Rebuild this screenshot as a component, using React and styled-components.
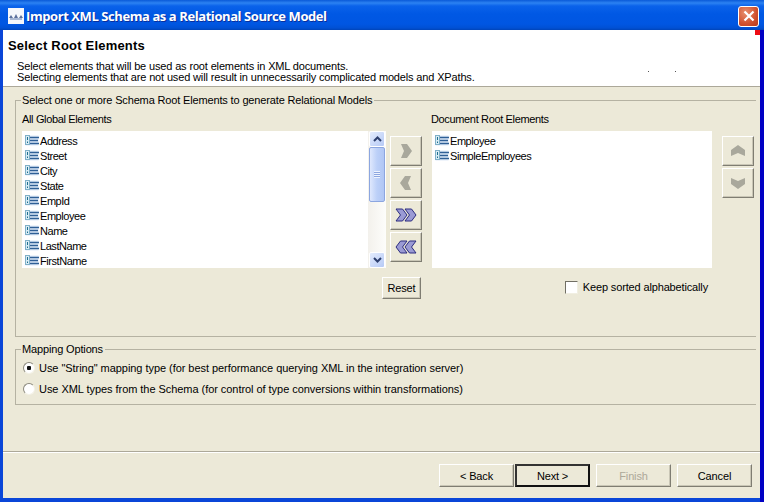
import React from 'react';
import styled, { createGlobalStyle } from 'styled-components';

const GlobalStyle = createGlobalStyle`
  html, body {
    margin: 0;
    padding: 0;
    background: #ece9d8;
  }
  * {
    box-sizing: border-box;
  }
`;

const globalElements = ['Address', 'Street', 'City', 'State', 'EmpId', 'Employee', 'Name', 'LastName', 'FirstName'];
const rootElements = ['Employee', 'SimpleEmployees'];

const ElementIcon = () => (
  <svg width="14" height="11" viewBox="0 0 14 11" style={{ flex: 'none' }}>
    <rect x="0.5" y="0.5" width="13" height="10" fill="#dfeaf8" />
    <rect x="0.5" y="0.5" width="4" height="9" fill="#d8ecf4" stroke="#7fb0c8" strokeWidth="1" />
    <path d="M2.5 2v3M2.5 6.5v1.5" stroke="#1f6f8f" strokeWidth="1" />
    <path d="M5 2.5h9M5 5.5h8M5 8.5h9" stroke="#2f5f96" strokeWidth="1.3" />
  </svg>
);

const Chevron = ({ dir, double, disabled }) => {
  const fill = disabled ? '#a9a89c' : '#9a9ad4';
  const stroke = disabled ? 'none' : '#2c2c80';
  const rot = { right: 0, left: 180, up: 270, down: 90 }[dir];
  return (
    <svg width="22" height="18" viewBox="0 0 22 18">
      <g transform={`rotate(${rot} 11 9)`} fill={fill} stroke={stroke} strokeWidth="1">
        {double ? (
          <>
            <path d="M1 3h6.5l4.5 6-4.5 6H1l4.5-6z" />
            <path d="M10 3h6.5l4.5 6-4.5 6H10l4.5-6z" />
          </>
        ) : (
          <path d="M6 2h6l5 7-5 7H6l3-7z" />
        )}
      </g>
    </svg>
  );
};

const App = () => (
  <>
    <GlobalStyle />
    <Window>
      <TitleBar>
        <AppIcon>
          <svg width="16" height="16" viewBox="0 0 16 16">
            <rect width="16" height="16" fill="#f4f6fb" />
            <path d="M1 10l2-3 2 3zM6 10l2-4 2 4zM11 10l2-3 2 3z" fill="#5a6f9c" />
            <path d="M2 11h12" stroke="#8fa2c6" strokeWidth="1.5" />
          </svg>
        </AppIcon>
        <TitleText>Import XML Schema as a Relational Source Model</TitleText>
        <CloseButton>
          <svg width="12" height="12" viewBox="0 0 12 12">
            <path d="M1.5 1.5l9 9M10.5 1.5l-9 9" stroke="#fff" strokeWidth="2.2" />
          </svg>
        </CloseButton>
      </TitleBar>
      <Body>
        <Header>
          <PageTitle>Select Root Elements</PageTitle>
          <Description>
            Select elements that will be used as root elements in XML documents.
            <br />
            Selecting elements that are not used will result in unnecessarily complicated models and XPaths.
          </Description>
          <ErrorMark />
          <Speck $right={111} />
          <Speck $right={84} />
        </Header>
        <Content>
          <RootGroup>
            <Legend>Select one or more Schema Root Elements to generate Relational Models</Legend>
            <Columns>
              <LeftColumn>
                <ColumnLabel>All Global Elements</ColumnLabel>
                <ListBox $width={364}>
                  <ListItems>
                    {globalElements.map((name) => (
                      <ListItem key={name}>
                        <ElementIcon />
                        {name}
                      </ListItem>
                    ))}
                  </ListItems>
                  <ScrollBar>
                    <ScrollArrow>
                      <svg width="9" height="6" viewBox="0 0 9 6">
                        <path d="M1 5l3.5-3.5L8 5" fill="none" stroke="#2d3f6e" strokeWidth="2" />
                      </svg>
                    </ScrollArrow>
                    <ScrollTrack>
                      <ScrollThumb>
                        <ThumbGrip />
                      </ScrollThumb>
                    </ScrollTrack>
                    <ScrollArrow>
                      <svg width="9" height="6" viewBox="0 0 9 6">
                        <path d="M1 1l3.5 3.5L8 1" fill="none" stroke="#2d3f6e" strokeWidth="2" />
                      </svg>
                    </ScrollArrow>
                  </ScrollBar>
                </ListBox>
                <ResetRow>
                  <ResetButton>Reset</ResetButton>
                </ResetRow>
              </LeftColumn>
              <MoveButtons>
                <IconButton><Chevron dir="right" disabled /></IconButton>
                <IconButton><Chevron dir="left" disabled /></IconButton>
                <IconButton><Chevron dir="right" double /></IconButton>
                <IconButton><Chevron dir="left" double /></IconButton>
              </MoveButtons>
              <RightColumn>
                <RightLabel>Document Root Elements</RightLabel>
                <ListBox $width={280}>
                  <ListItems>
                    {rootElements.map((name) => (
                      <ListItem key={name}>
                        <ElementIcon />
                        {name}
                      </ListItem>
                    ))}
                  </ListItems>
                </ListBox>
                <SortRow>
                  <CheckBox />
                  Keep sorted alphabetically
                </SortRow>
              </RightColumn>
              <OrderButtons>
                <IconButton><Chevron dir="up" disabled /></IconButton>
                <IconButton><Chevron dir="down" disabled /></IconButton>
              </OrderButtons>
            </Columns>
          </RootGroup>
          <MappingGroup>
            <Legend>Mapping Options</Legend>
            <RadioRow>
              <Radio $checked />
              Use "String" mapping type (for best performance querying XML in the integration server)
            </RadioRow>
            <RadioRow>
              <Radio />
              Use XML types from the Schema (for control of type conversions within transformations)
            </RadioRow>
          </MappingGroup>
        </Content>
        <Footer>
          <FooterButton>&lt; Back</FooterButton>
          <FooterButton $default>Next &gt;</FooterButton>
          <FooterButton $gap disabled>Finish</FooterButton>
          <FooterButton $gap>Cancel</FooterButton>
        </Footer>
      </Body>
    </Window>
  </>
);

const Window = styled.div`
  width: 764px;
  height: 502px;
  display: flex;
  flex-direction: column;
  overflow: hidden;
  background: linear-gradient(270deg, #0000c4 0 4px, #0a46d8 4px);
  font-family: 'Liberation Sans', Arial, sans-serif;
  font-size: 11px;
  letter-spacing: -0.15px;
  color: #000;
`;

const TitleBar = styled.div`
  height: 30px;
  flex: none;
  display: flex;
  align-items: center;
  padding: 2px 5px 0 8px;
  background: linear-gradient(
    180deg,
    #0a5ad8 0,
    #2c82f2 3px,
    #0a62ea 6px,
    #0058e4 14px,
    #0056e2 24px,
    #0050d4 28px,
    #0044b8 30px
  );
`;

const AppIcon = styled.div`
  width: 16px;
  height: 16px;
  display: flex;
`;

const TitleText = styled.div`
  flex: 1;
  margin-left: 2px;
  font-family: 'Open Sans', 'Liberation Sans', sans-serif;
  font-size: 13px;
  font-weight: 700;
  letter-spacing: -0.42px;
  color: #fff;
  text-shadow: 1px 1px 0 #0a2f9c;
  white-space: nowrap;
`;

const CloseButton = styled.div`
  width: 21px;
  height: 21px;
  display: flex;
  align-items: center;
  justify-content: center;
  border: 1px solid #fff;
  border-radius: 3px;
  background: radial-gradient(circle at 35% 30%, #e8916f, #d0512e 60%, #b93a1a);
`;

const Body = styled.div`
  flex: 1;
  display: flex;
  flex-direction: column;
  margin: 0 4px 4px 3px;
  background: #ece9d8;
  min-height: 0;
`;

const Header = styled.div`
  position: relative;
  height: 57px;
  flex: none;
  padding: 9px 0 0 5px;
  background: #fff;
  border-bottom: 1px solid #aca899;
`;

const PageTitle = styled.div`
  font-size: 13px;
  font-weight: 700;
  line-height: 14px;
  letter-spacing: 0.2px;
`;

const Description = styled.div`
  margin: 8px 0 0 9px;
  line-height: 11px;
  white-space: nowrap;
`;

const ErrorMark = styled.div`
  position: absolute;
  top: 0;
  right: 0;
  width: 5px;
  height: 5px;
  background: #ee0c14;
`;

const Speck = styled.div`
  position: absolute;
  top: 41px;
  right: ${(p) => p.$right}px;
  width: 1px;
  height: 1px;
  background: #555;
`;

const Content = styled.div`
  flex: 1;
  padding: 8px 4px 0 12px;
  border-bottom: 1px solid #aca899;
  min-height: 0;
`;

const Group = styled.div`
  position: relative;
  border: solid #b5b2a2;
  border-width: 1px 0 1px 1px;
`;

const RootGroup = styled(Group)`
  height: 237px;
  margin-top: 5px;
  padding: 7px 0 0 6px;
`;

const MappingGroup = styled(Group)`
  height: 56px;
  margin-top: 12px;
  padding: 7px 0 0 7px;
`;

const Legend = styled.div`
  position: absolute;
  top: -7px;
  left: 5px;
  padding: 0 2px 0 1px;
  background: #ece9d8;
  line-height: 13px;
  white-space: nowrap;
`;

const Columns = styled.div`
  display: flex;
  align-items: flex-start;
`;

const LeftColumn = styled.div`
  width: 368px;
  flex: none;
`;

const RightColumn = styled.div`
  width: 280px;
  flex: none;
`;

const ColumnLabel = styled.div`
  height: 23px;
  line-height: 13px;
  padding-top: 5px;
  letter-spacing: -0.35px;
`;

const RightLabel = styled(ColumnLabel)`
  margin-left: -1px;
`;

const ListBox = styled.div`
  width: ${(p) => p.$width}px;
  height: 137px;
  display: flex;
  background: #fff;
  overflow: hidden;
`;

const ListItems = styled.div`
  flex: 1;
  padding: 2px 0 0 3px;
`;

const ListItem = styled.div`
  height: 15px;
  display: flex;
  align-items: center;
  gap: 1px;
  white-space: nowrap;
  letter-spacing: -0.45px;
`;

const ScrollBar = styled.div`
  width: 18px;
  flex: none;
  display: flex;
  flex-direction: column;
  background: linear-gradient(90deg, #f3f1ec, #fdfdfb);
`;

const ScrollArrow = styled.div`
  width: 16px;
  height: 16px;
  margin: 0 1px;
  flex: none;
  display: flex;
  align-items: center;
  justify-content: center;
  border: 1px solid #fff;
  border-radius: 2px;
  background: linear-gradient(135deg, #e4ecfd, #b6caf6);
`;

const ScrollTrack = styled.div`
  flex: 1;
  padding: 0 1px;
`;

const ScrollThumb = styled.div`
  height: 55px;
  display: flex;
  align-items: center;
  justify-content: center;
  border: 1px solid #8ca6e0;
  border-radius: 2px;
  background: linear-gradient(90deg, #dfe8fd, #bcd0f8 50%, #b0c6f4);
`;

const ThumbGrip = styled.div`
  width: 6px;
  height: 7px;
  background: repeating-linear-gradient(180deg, #eef3fe 0 1px, #8ca6e0 1px 2px);
`;

const ResetRow = styled.div`
  display: flex;
  justify-content: flex-end;
  margin-top: 9px;
`;

const RaisedButton = styled.div`
  display: flex;
  align-items: center;
  justify-content: center;
  background: #ece9d8;
  border: 1px solid;
  border-color: #fff #7f7d72 #7f7d72 #fff;
  box-shadow: inset -1px -1px 0 #c9c6b6;
`;

const ResetButton = styled(RaisedButton)`
  width: 39px;
  height: 22px;
  margin-right: -31px;
`;

const MoveButtons = styled.div`
  width: 42px;
  flex: none;
  display: flex;
  flex-direction: column;
  gap: 2px;
  padding: 28px 0 0 0;
`;

const OrderButtons = styled(MoveButtons)`
  padding-left: 10px;
`;

const IconButton = styled(RaisedButton)`
  width: 32px;
  height: 30px;
`;

const SortRow = styled.div`
  display: flex;
  align-items: center;
  justify-content: flex-end;
  gap: 5px;
  margin-top: 13px;
  padding-right: 4px;
  line-height: 13px;
`;

const CheckBox = styled.span`
  width: 13px;
  height: 13px;
  flex: none;
  background: #fff;
  border: 1px solid;
  border-color: #716f64 #f1efe2 #f1efe2 #716f64;
`;

const RadioRow = styled.div`
  height: 21px;
  display: flex;
  align-items: center;
  gap: 4px;
  white-space: nowrap;
  letter-spacing: -0.05px;
`;

const Radio = styled.span`
  width: 12px;
  height: 12px;
  flex: none;
  border-radius: 50%;
  background: radial-gradient(circle, ${(p) => (p.$checked ? '#111 0 2px, #fff 2.5px' : '#fff 0 100%')});
  border: 1px solid;
  border-color: #8c8a7e #f4f2e8 #f4f2e8 #8c8a7e;
`;

const Footer = styled.div`
  height: 46px;
  flex: none;
  display: flex;
  align-items: flex-start;
  padding: 11px 8px 0 436px;
  border-top: 1px solid #fff;
`;

const FooterButton = styled(RaisedButton)`
  width: 75px;
  height: 23px;
  margin-left: ${(p) => (p.$gap ? '6px' : '1px')};
  &:first-child {
    margin-left: 0;
  }
  color: ${(p) => (p.disabled ? '#aca899' : '#000')};
  ${(p) => p.$default && 'border: 2px solid #1c1c1c; border-color: #333 #111 #111 #333; box-shadow: none;'}
`;

export default App;
